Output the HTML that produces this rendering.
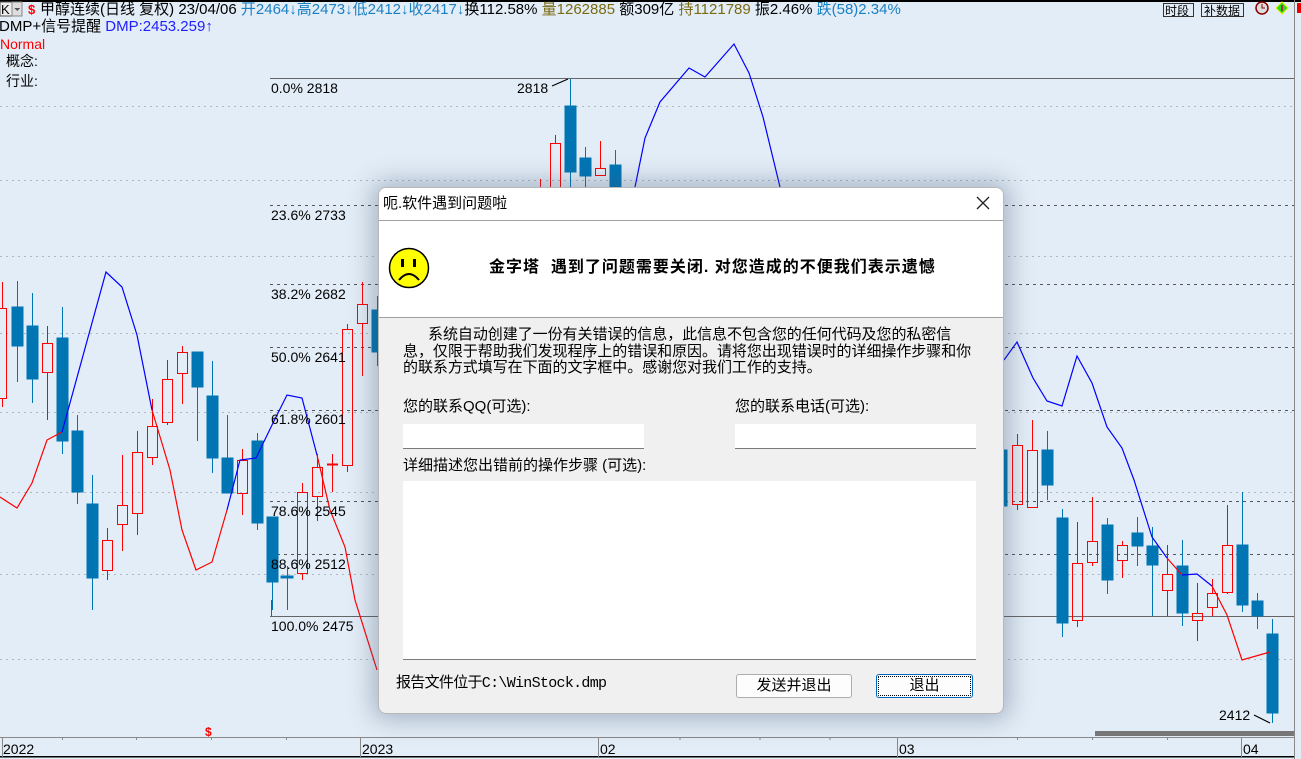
<!DOCTYPE html>
<html><head><meta charset="utf-8">
<style>
*{margin:0;padding:0;box-sizing:border-box}
body{width:1301px;height:759px;overflow:hidden;background:#e3edf7;font-family:"Liberation Sans","Noto Sans CJK SC",sans-serif;position:relative}
.t{position:absolute;white-space:nowrap;font-size:14px;line-height:16px}
.dlg{position:absolute;left:378px;top:187px;width:626px;height:527px;background:#f0f0f0;border:1px solid #b8b8b8;border-radius:8px;box-shadow:0 0 24px 6px rgba(60,80,110,.35);overflow:hidden;font-family:"Liberation Sans","WenQuanYi Zen Hei","Noto Sans CJK SC",sans-serif}
.dlg .d{position:absolute;white-space:nowrap;font-size:15px;line-height:16px;color:#000}
.inp{position:absolute;background:#fff;border-bottom:1px solid #7a7a7a}
.btn{position:absolute;background:#fdfdfd;border:1px solid #adadad;border-radius:3px;font-size:15px;text-align:center;line-height:22px}
</style></head><body>
<svg width="1301" height="759" style="position:absolute;left:0;top:0" shape-rendering="crispEdges">
<rect x="0" y="0" width="1301" height="2" fill="#000"/>
<g stroke="#b0b8c0" stroke-dasharray="2,4" stroke-width="1">
<line x1="0" y1="106.5" x2="1294" y2="106.5"/><line x1="0" y1="180.5" x2="1294" y2="180.5"/><line x1="0" y1="256.5" x2="1294" y2="256.5"/><line x1="0" y1="333.5" x2="1294" y2="333.5"/><line x1="0" y1="412.5" x2="1294" y2="412.5"/><line x1="0" y1="492.5" x2="1294" y2="492.5"/><line x1="0" y1="574.5" x2="1294" y2="574.5"/><line x1="0" y1="659.5" x2="1294" y2="659.5"/>
</g>
<g stroke="#555" stroke-dasharray="3,4" stroke-width="1">
<line x1="270" y1="205.5" x2="1294" y2="205.5"/><line x1="270" y1="284.5" x2="1294" y2="284.5"/><line x1="270" y1="347.5" x2="1294" y2="347.5"/><line x1="270" y1="410.5" x2="1294" y2="410.5"/><line x1="270" y1="501.5" x2="1294" y2="501.5"/><line x1="270" y1="554.5" x2="1294" y2="554.5"/>
</g>
<line x1="270" y1="78.5" x2="1294" y2="78.5" stroke="#666"/>
<line x1="270" y1="616.5" x2="1294" y2="616.5" stroke="#666"/>
<line x1="271.5" y1="600" x2="271.5" y2="616" stroke="#0070b0"/>
<line x1="1294.5" y1="0" x2="1294.5" y2="759" stroke="#888"/>
<g stroke-width="1">
<g fill="#0075b4" stroke="#0075b4">
<path d="M17.5 281V382M32.5 293V403M62.5 307V454M77.5 415V504M92.5 475V610M197.5 352V441M212.5 361V473M227.5 415V493M257.5 433V530M272.5 517V610M287.5 566V610M377.5 296V366M570.5 79V190M585.5 147V190M615.5 150V190M1047.5 431V500M1062.5 509V637M1107.5 518V594M1137.5 517V566M1152.5 527V616M1182.5 540V626M1242.5 492V612M1257.5 593V629M1272.5 619V723" fill="none"/>
<rect x="12" y="307" width="11" height="39"/><rect x="27" y="326" width="11" height="53"/><rect x="57" y="338" width="11" height="103"/><rect x="72" y="431" width="11" height="61"/><rect x="87" y="504" width="11" height="74"/><rect x="192" y="352" width="11" height="35"/><rect x="207" y="396" width="11" height="62"/><rect x="222" y="458" width="11" height="35"/><rect x="252" y="441" width="11" height="82"/><rect x="267" y="517" width="11" height="65"/><rect x="281" y="576" width="12" height="2"/><rect x="372" y="310" width="10" height="42"/><rect x="565" y="106" width="11" height="66"/><rect x="580" y="158" width="11" height="18"/><rect x="610" y="165" width="11" height="25"/><rect x="999" y="450" width="8" height="56"/><rect x="1042" y="450" width="11" height="35"/><rect x="1057" y="518" width="11" height="105"/><rect x="1102" y="525" width="11" height="55"/><rect x="1132" y="533" width="11" height="13"/><rect x="1147" y="546" width="11" height="19"/><rect x="1177" y="566" width="11" height="47"/><rect x="1237" y="545" width="11" height="60"/><rect x="1252" y="601" width="11" height="15"/><rect x="1267" y="634" width="11" height="79"/>
</g>
<g stroke="#f00" fill="none">
<path d="M2.5 282V308M2.5 398V407M47.5 326V343M47.5 372V420M107.5 528V540M107.5 570V580M122.5 455V505M122.5 524V551M137.5 431V452M137.5 513V535M152.5 399V426M152.5 457V465M167.5 360V379M167.5 422V425M182.5 346V352M182.5 373V404M242.5 449V460M242.5 493V515M302.5 483V492M302.5 573V580M317.5 454V467M317.5 496V521M332.5 454V492M347.5 324V329M347.5 465V472M362.5 282V304M362.5 323V376M555.5 135V143M540.5 179V190M600.5 141V168M1017.5 434V445M1017.5 504V510M1032.5 420V450M1077.5 522V563M1077.5 620V627M1092.5 497V541M1092.5 562V566M1122.5 541V545M1122.5 560V578M1167.5 545V574M1167.5 590V616M1197.5 583V613M1197.5 620V641M1212.5 579V593M1212.5 607V616M1227.5 505V545M1227.5 592V594"/>
<rect x="-3.5" y="308.5" width="10" height="90"/><rect x="42.5" y="343.5" width="10" height="29"/><rect x="102.5" y="540.5" width="10" height="30"/><rect x="117.5" y="505.5" width="10" height="19"/><rect x="132.5" y="452.5" width="10" height="61"/><rect x="147.5" y="426.5" width="10" height="31"/><rect x="162.5" y="379.5" width="10" height="43"/><rect x="177.5" y="352.5" width="10" height="21"/><rect x="237.5" y="460.5" width="10" height="33"/><rect x="297.5" y="492.5" width="10" height="81"/><rect x="312.5" y="467.5" width="10" height="29"/><rect x="342.5" y="329.5" width="10" height="136"/><rect x="357.5" y="304.5" width="10" height="19"/><rect x="550.5" y="143.5" width="10" height="47"/><rect x="595.5" y="168.5" width="10" height="7"/><rect x="1012.5" y="445.5" width="10" height="59"/><rect x="1027.5" y="450.5" width="10" height="57"/><rect x="1072.5" y="563.5" width="10" height="57"/><rect x="1087.5" y="541.5" width="10" height="21"/><rect x="1117.5" y="545.5" width="10" height="15"/><rect x="1162.5" y="574.5" width="10" height="16"/><rect x="1192.5" y="613.5" width="10" height="7"/><rect x="1207.5" y="593.5" width="10" height="14"/><rect x="1222.5" y="545.5" width="10" height="47"/>
<path d="M327 464.5H338" stroke-width="2"/>
</g>
</g>
<g fill="none" stroke-width="1.2" shape-rendering="auto">
<polyline stroke="#f00" points="0,497 17,508 32,483 47,440 62,432"/>
<polyline stroke="#00f" points="62,432 106,272 122,287 137,335 152,410"/>
<polyline stroke="#f00" points="152,410 170,470 182,530 196,570 212,562 227,510"/>
<polyline stroke="#00f" points="227,510 240,460 256,458 273,423 287,395 302,398 317,455"/>
<polyline stroke="#f00" points="317,455 330,510 345,547 355,600 377,670"/>
<polyline stroke="#00f" points="635,187 645,138 660,102 689,68 705,77 734,44 749,73 763,117 780,187"/>
<polyline stroke="#00f" points="1004,360 1017,342 1033,378 1047,401 1062,406 1077,356 1092,383 1107,427 1122,448 1134,480 1152,537 1167,558"/>
<polyline stroke="#f00" points="1167,558 1182,575"/>
<polyline stroke="#00f" points="1182,575 1197,574 1212,586"/>
<polyline stroke="#f00" points="1212,586 1227,615 1242,660 1270,652"/>
<line x1="552" y1="86" x2="568" y2="79" stroke="#000"/>
<line x1="1254" y1="715" x2="1270" y2="723" stroke="#000"/>
</g>
<rect x="1095" y="731" width="199" height="5" fill="#777"/>
<line x1="0" y1="737.5" x2="1294" y2="737.5" stroke="#888"/>
<line x1="0" y1="756.5" x2="1294" y2="756.5" stroke="#000" stroke-width="1.5"/>
<g stroke="#888"><path d="M2.5 737V757M360.5 737V757M598.5 737V757M897.5 737V757M1241.5 737V757M62.5 737V740M136.5 737V740M211.5 737V740M286.5 737V740M680 737V740M760 737V740M830 737V740M1017.5 737V740M1092.5 737V740M1167.5 737V740"/></g>
<rect x="1163.5" y="3.5" width="30" height="13" fill="#e3edf7" stroke="#333"/>
<rect x="1201.5" y="3.5" width="42" height="13" fill="#e3edf7" stroke="#333"/>
<circle cx="1262" cy="8" r="6" fill="#ddd" stroke="#800" stroke-width="1.5" shape-rendering="auto"/>
<path d="M1262 4V8H1265" stroke="#800" fill="none"/>
<path d="M1282 2L1288 8L1282 14L1276 8Z" fill="#2d2" stroke="#ee0" shape-rendering="auto"/>
<rect x="1281" y="5" width="2" height="6" fill="#a33"/>
<rect x="1297" y="3" width="4" height="10" fill="#e00"/>
<rect x="0" y="2" width="12" height="14" fill="#eee" stroke="#555"/>
<rect x="12" y="2" width="10" height="14" fill="#ddd" stroke="#888"/>
<path d="M14 8L17 11L20 8Z" fill="#555"/>
</svg>
<div class="t" style="left:1px;top:2px;font-size:13px">K</div>
<div class="t" style="left:28px;top:2px;color:#f00;font-weight:bold;font-size:13px">$</div>
<div class="t" style="left:40px;top:2px;color:#000;font-size:15px;line-height:16px">甲醇连续(日线 复权) 23/04/06 <span style="color:#1a80c4">开2464↓高2473↓低2412↓收2417↓</span>换112.58% <span style="color:#7a6a10">量1262885</span> 额309亿 <span style="color:#7a6a10">持1121789</span> 振2.46% <span style="color:#1a80c4">跌(58)2.34%</span></div>
<div class="t" style="left:1165px;top:3px;font-size:12px">时段</div>
<div class="t" style="left:1204px;top:3px;font-size:12px">补数据</div>
<div class="t" style="left:-1px;top:19px;font-size:15px">DMP+信号提醒 <span style="color:#2020ff">DMP:2453.259↑</span></div>
<div class="t" style="left:0;top:36px;color:#f00">Normal</div>
<div class="t" style="left:6px;top:53px">概念:</div>
<div class="t" style="left:6px;top:73px">行业:</div>
<div class="t" style="left:271px;top:80px">0.0% 2818</div>
<div class="t" style="left:517px;top:80px">2818</div>
<div class="t" style="left:271px;top:207px">23.6% 2733</div>
<div class="t" style="left:271px;top:286px">38.2% 2682</div>
<div class="t" style="left:271px;top:349px">50.0% 2641</div>
<div class="t" style="left:271px;top:411px">61.8% 2601</div>
<div class="t" style="left:271px;top:503px">78.6% 2545</div>
<div class="t" style="left:271px;top:556px">88.6% 2512</div>
<div class="t" style="left:271px;top:618px">100.0% 2475</div>
<div class="t" style="left:1219px;top:707px">2412</div>
<div class="t" style="left:205px;top:724px;color:#f00;font-weight:bold;font-size:12px">$</div>
<div class="t" style="left:3px;top:741px">2022</div>
<div class="t" style="left:362px;top:741px">2023</div>
<div class="t" style="left:600px;top:741px">02</div>
<div class="t" style="left:899px;top:741px">03</div>
<div class="t" style="left:1243px;top:741px">04</div>

<div class="dlg">
 <div style="position:absolute;left:0;top:0;width:626px;height:130px;background:#fff;border-bottom:1px solid #a0a0a0"></div>
 <div style="position:absolute;left:0;top:32px;width:626px;height:1px;background:#a0a0a0"></div>
 <div class="d" style="left:4px;top:8px;font-size:15px">呃.软件遇到问题啦</div>
 <svg style="position:absolute;left:597px;top:8px" width="14" height="14"><path d="M1 1L13 13M13 1L1 13" stroke="#222" stroke-width="1.3"/></svg>
 <svg style="position:absolute;left:9px;top:59px" width="42" height="42"><circle cx="21" cy="21" r="19.5" fill="#ff0" stroke="#000" stroke-width="1.5"/><rect x="13" y="12" width="3" height="8"/><rect x="25" y="12" width="3" height="8"/><path d="M11 33Q21 21 31 33" fill="none" stroke="#000" stroke-width="2"/></svg>
 <div class="d" style="left:110px;top:72px;font-size:16px;font-weight:bold;letter-spacing:1px">金字塔 &nbsp;遇到了问题需要关闭. 对您造成的不便我们表示遗憾</div>
 <div class="d" style="left:24px;top:139px;font-size:15px;line-height:16.5px;white-space:normal;width:575px;text-indent:25px;letter-spacing:-0.05px">系统自动创建了一份有关错误的信息，此信息不包含您的任何代码及您的私密信息，仅限于帮助我们发现程序上的错误和原因。请将您出现错误时的详细操作步骤和你的联系方式填写在下面的文字框中。感谢您对我们工作的支持。</div>
 <div class="d" style="left:24px;top:211px">您的联系QQ(可选):</div>
 <div class="d" style="left:356px;top:211px">您的联系电话(可选):</div>
 <div class="inp" style="left:24px;top:236px;width:241px;height:25px"></div>
 <div class="inp" style="left:356px;top:236px;width:241px;height:25px"></div>
 <div class="d" style="left:24px;top:270px">详细描述您出错前的操作步骤 (可选):</div>
 <div class="inp" style="left:24px;top:293px;width:573px;height:179px"></div>
 <div class="d" style="left:17px;top:488px;font-family:'Liberation Mono','WenQuanYi Zen Hei',monospace;letter-spacing:-0.7px">报告文件位于C:\WinStock.dmp</div>
 <div class="btn" style="left:357px;top:486px;width:116px;height:24px">发送并退出</div>
 <div class="btn" style="left:497px;top:486px;width:97px;height:24px;border:1px solid #0067c0;outline:1px dotted #000;outline-offset:-3px">退出</div>
</div>
</body></html>
